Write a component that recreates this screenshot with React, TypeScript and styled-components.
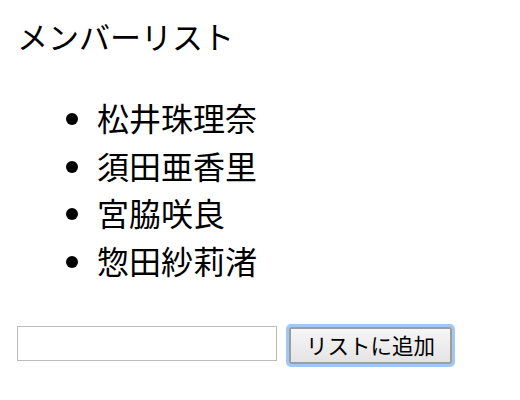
import React from "react";
import styled, { createGlobalStyle } from "styled-components";

const GlobalStyle = createGlobalStyle`
  html, body {
    margin: 0;
    padding: 0;
    background: #ffffff;
  }
  body {
    font-family: "Noto Sans CJK JP", "Noto Sans", sans-serif;
    color: #000000;
  }
`;

const Page = styled.div`
  padding: 16px 0 20px 16px;
  display: flex;
  flex-direction: column;
  align-items: flex-start;
`;

const Title = styled.h1`
  margin: 0;
  font-size: 31px;
  line-height: 40px;
  font-weight: 400;
  padding-left: 1px;
`;

const MemberList = styled.ul`
  margin: 38px 0 0 0;
  padding: 0 0 0 81px;
  list-style: disc;
`;

const Member = styled.li`
  font-size: 32px;
  line-height: 47.5px;
`;

const Form = styled.form`
  margin-top: 42px;
  display: flex;
  align-items: flex-start;
  gap: 12px;
  padding-left: 1px;
`;

const TextInput = styled.input`
  display: block;
  box-sizing: border-box;
  width: 260px;
  height: 35px;
  margin: 0;
  border: 1px solid #bcbcbc;
  background: #ffffff;
  padding: 2px 6px;
  font-size: 20px;
  font-family: inherit;
  outline: none;
`;

const AddButton = styled.button`
  display: block;
  box-sizing: border-box;
  margin: 1px 0 0 0;
  height: 37px;
  width: 163px;
  padding: 0 0 2px 0;
  border: 2px solid #9d9d9d;
  border-radius: 2px;
  background: linear-gradient(#f6f6f6, #e4e4e4);
  font-family: inherit;
  font-size: 21.5px;
  line-height: 31px;
  color: #000000;
  box-shadow: 0 0 0 3px #a3c6f3;
  outline: none;
  cursor: pointer;
`;

const members = ["松井珠理奈", "須田亜香里", "宮脇咲良", "惣田紗莉渚"];

export default function App() {
  return (
    <>
      <GlobalStyle />
      <Page>
        <Title>メンバーリスト</Title>
        <MemberList>
          {members.map((m) => (
            <Member key={m}>{m}</Member>
          ))}
        </MemberList>
        <Form onSubmit={(e) => e.preventDefault()}>
          <TextInput type="text" />
          <AddButton type="submit">リストに追加</AddButton>
        </Form>
      </Page>
    </>
  );
}
